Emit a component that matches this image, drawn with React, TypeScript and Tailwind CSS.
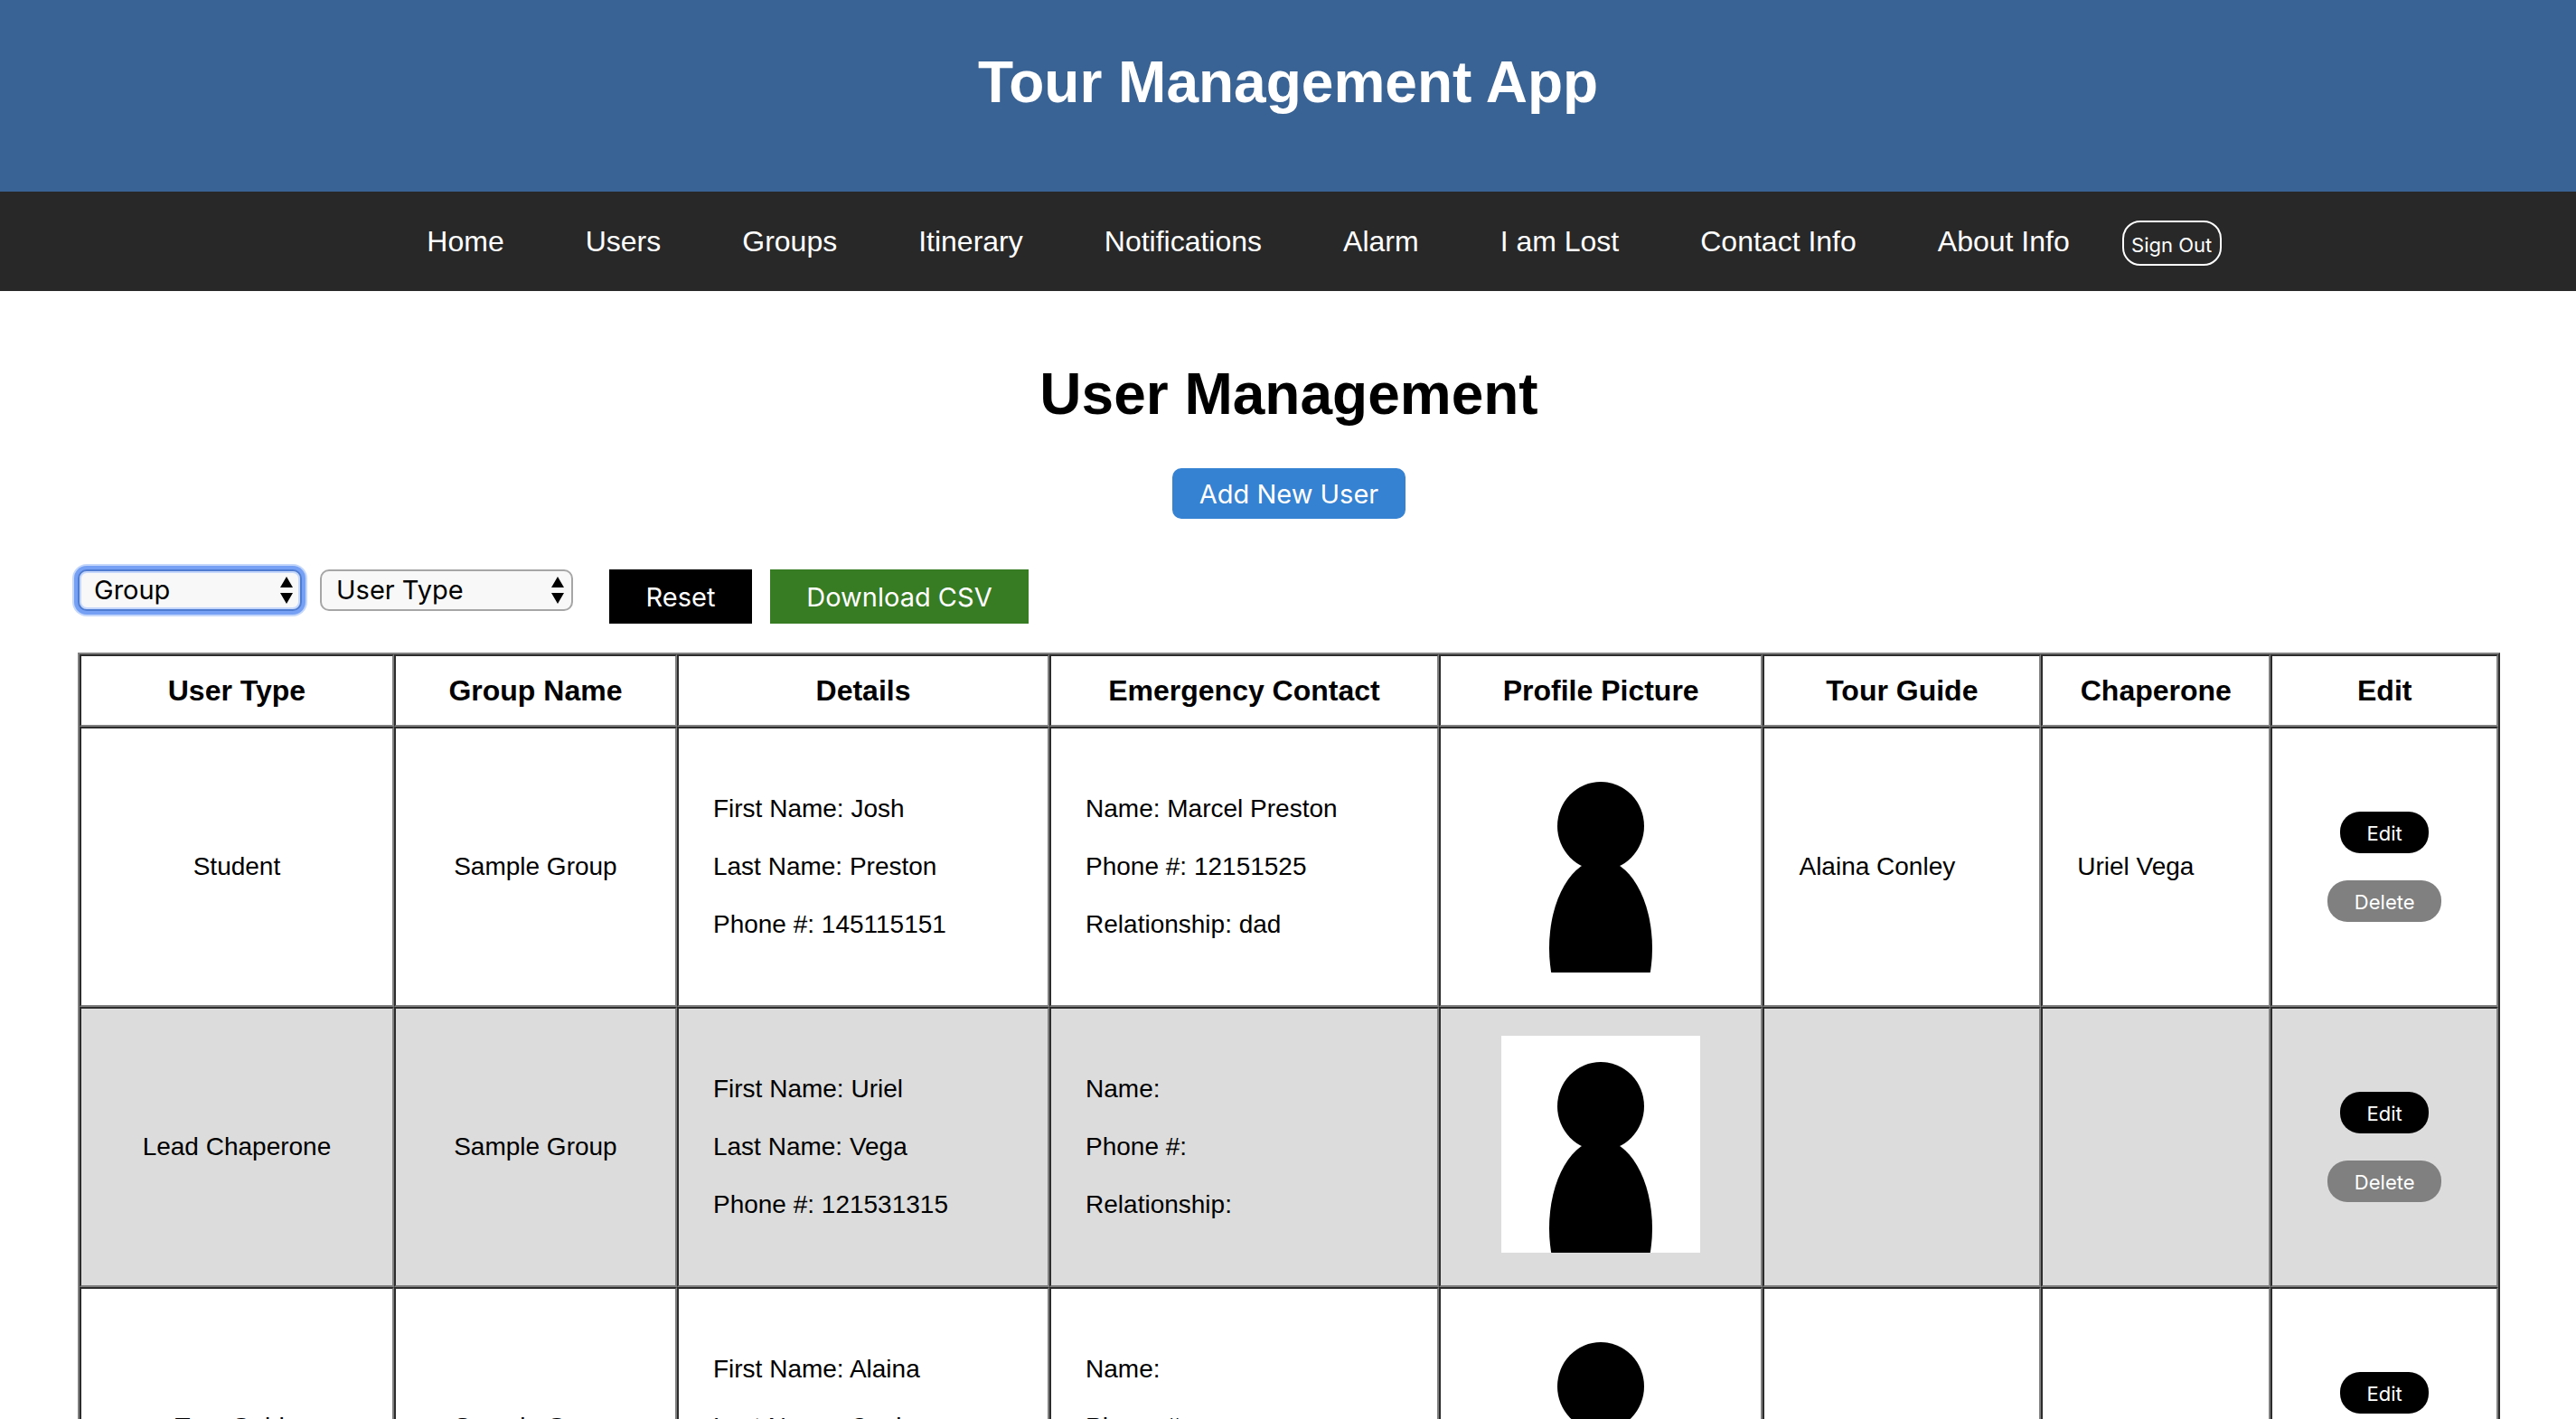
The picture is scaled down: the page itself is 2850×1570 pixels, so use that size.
import React from "react";

type User = {
  type: string;
  group: string;
  first: string;
  last: string;
  phone: string;
  contact: string;
  contactPhone: string;
  relationship: string;
  guide: string;
  chaperone: string;
};

const users: User[] = [
  { type: "Student", group: "Sample Group", first: "Josh", last: "Preston", phone: "145115151", contact: "Marcel Preston", contactPhone: "12151525", relationship: "dad", guide: "Alaina Conley", chaperone: "Uriel Vega" },
  { type: "Lead Chaperone", group: "Sample Group", first: "Uriel", last: "Vega", phone: "121531315", contact: "", contactPhone: "", relationship: "", guide: "", chaperone: "" },
  { type: "Tour Guide", group: "Sample Group", first: "Alaina", last: "Conley", phone: "", contact: "", contactPhone: "", relationship: "", guide: "", chaperone: "" },
];

const links = ["Home", "Users", "Groups", "Itinerary", "Notifications", "Alarm", "I am Lost", "Contact Info", "About Info"];

const columns = [
  { label: "User Type", width: "w-[13%]" },
  { label: "Group Name", width: "w-[11.7%]" },
  { label: "Details", width: "w-[15.4%]" },
  { label: "Emergency Contact", width: "w-[16.1%]" },
  { label: "Profile Picture", width: "w-[13.4%]" },
  { label: "Tour Guide", width: "w-[11.5%]" },
  { label: "Chaperone", width: "w-[9.5%]" },
  { label: "Edit", width: "w-[9.4%]" },
];

const cell = "border-2 border-t-[#2c2c2c] border-l-[#2c2c2c] border-r-[#808080] border-b-[#808080]";
const ui = "font-[Inter,sans-serif]";

function Filter({ label, width, focused = false }: { label: string; width: string; focused?: boolean }) {
  return (
    <div className={`relative ${width}`}>
      <select
        aria-label={label}
        className={`${ui} block h-[46px] w-full appearance-none rounded-[10px] border-2 bg-[#f8f8f8] pl-4 text-[29px] leading-[40px] text-black outline-none ${
          focused ? "border-[#4f7bd0] shadow-[0_0_0_4px_#76a0f3,0_0_0_6px_#c5d8fb,inset_0_0_0_2px_#c5d8fb]" : "border-[#a6a6a6]"
        }`}
      >
        <option>{label}</option>
      </select>
      <svg aria-hidden="true" viewBox="0 0 14 30" className="pointer-events-none absolute top-2 right-[10px] h-[30px] w-[14px]">
        <path d="M7 0L14 12H0ZM7 30L14 18H0Z" fill="#000" />
      </svg>
    </div>
  );
}

function Portrait() {
  return (
    <svg role="img" aria-label="Profile picture" viewBox="0 0 220 240" className="mx-auto block h-[240px] w-[220px] bg-white">
      <ellipse cx="110" cy="78" rx="48" ry="49" />
      <ellipse cx="110" cy="213" rx="57" ry="98" />
    </svg>
  );
}

export default function App() {
  return (
    <div className="min-h-screen bg-white font-['Liberation_Sans',Arial,sans-serif] text-black">
      <header className="bg-[#396295] pt-[54px] pb-[84px] text-center">
        <h1 className="text-[64px] leading-[74px] font-bold text-white">Tour Management App</h1>
      </header>

      <nav className="flex h-[110px] items-center justify-center bg-[#282828] pl-20 text-white">
        <ul className="flex gap-[90px] text-[32px] leading-[36px] whitespace-nowrap">
          {links.map((l) => (
            <li key={l}>
              <a href="#">{l}</a>
            </li>
          ))}
        </ul>
        <button className={`${ui} mt-1 ml-[58px] h-[50px] w-[110px] rounded-[20px] border-2 border-white pt-1 text-[22px] leading-[26px] whitespace-nowrap`}>
          Sign Out
        </button>
      </nav>

      <main className="pt-[77px] pr-[84px] pl-[86px]">
        <h2 className="text-center text-[64px] leading-[74px] font-bold">User Management</h2>
        <button className={`${ui} mx-auto mt-[45px] block h-[56px] w-[258px] rounded-[10px] bg-[#3581d2] pt-[2px] text-[29px] leading-[40px] text-white`}>
          Add New User
        </button>

        <div className="mt-[56px] flex items-start">
          <Filter label="Group" width="w-[248px]" focused />
          <div className="ml-5 flex">
            <Filter label="User Type" width="w-[280px]" />
          </div>
          <button className={`${ui} ml-10 h-[60px] w-[158px] bg-black pt-[2px] text-[29px] leading-[40px] text-white`}>Reset</button>
          <button className={`${ui} ml-5 h-[60px] w-[286px] bg-[#377c22] pt-[2px] text-[29px] leading-[40px] text-white`}>Download CSV</button>
        </div>

        <table className="mt-8 w-full table-fixed border-separate border-spacing-0 border-2 border-t-[#808080] border-r-[#2c2c2c] border-b-[#2c2c2c] border-l-[#808080]">
          <thead>
            <tr>
              {columns.map((c) => (
                <th key={c.label} scope="col" className={`${cell} ${c.width} h-[80px] text-[32px] leading-[36px] font-bold`}>
                  {c.label}
                </th>
              ))}
            </tr>
          </thead>
          <tbody className="text-[28px] leading-[32px]">
            {users.map((u) => (
              <tr key={u.first} className="even:bg-[#dcdcdc]">
                <td className={`${cell} text-center`}>{u.type}</td>
                <td className={`${cell} text-center`}>{u.group}</td>
                <td className={`${cell} pl-[38px]`}>
                  <div className="flex flex-col gap-8">
                    <p>First Name: {u.first}</p>
                    <p>Last Name: {u.last}</p>
                    <p>Phone #: {u.phone}</p>
                  </div>
                </td>
                <td className={`${cell} pl-[38px]`}>
                  <div className="flex flex-col gap-8">
                    <p>Name: {u.contact}</p>
                    <p>Phone #: {u.contactPhone}</p>
                    <p>Relationship: {u.relationship}</p>
                  </div>
                </td>
                <td className={`${cell} pt-[30px] pb-[36px]`}>
                  <Portrait />
                </td>
                <td className={`${cell} pl-[38px]`}>{u.guide}</td>
                <td className={`${cell} pl-[38px]`}>{u.chaperone}</td>
                <td className={cell}>
                  <div className={`${ui} flex flex-col items-center gap-[30px] text-[22px] leading-[26px] text-white`}>
                    <button className="h-[46px] w-[98px] rounded-[22px] bg-black pt-[2px]">Edit</button>
                    <button className="h-[46px] w-[126px] rounded-[22px] bg-[#808080] pt-[2px]">Delete</button>
                  </div>
                </td>
              </tr>
            ))}
          </tbody>
        </table>
      </main>
    </div>
  );
}
